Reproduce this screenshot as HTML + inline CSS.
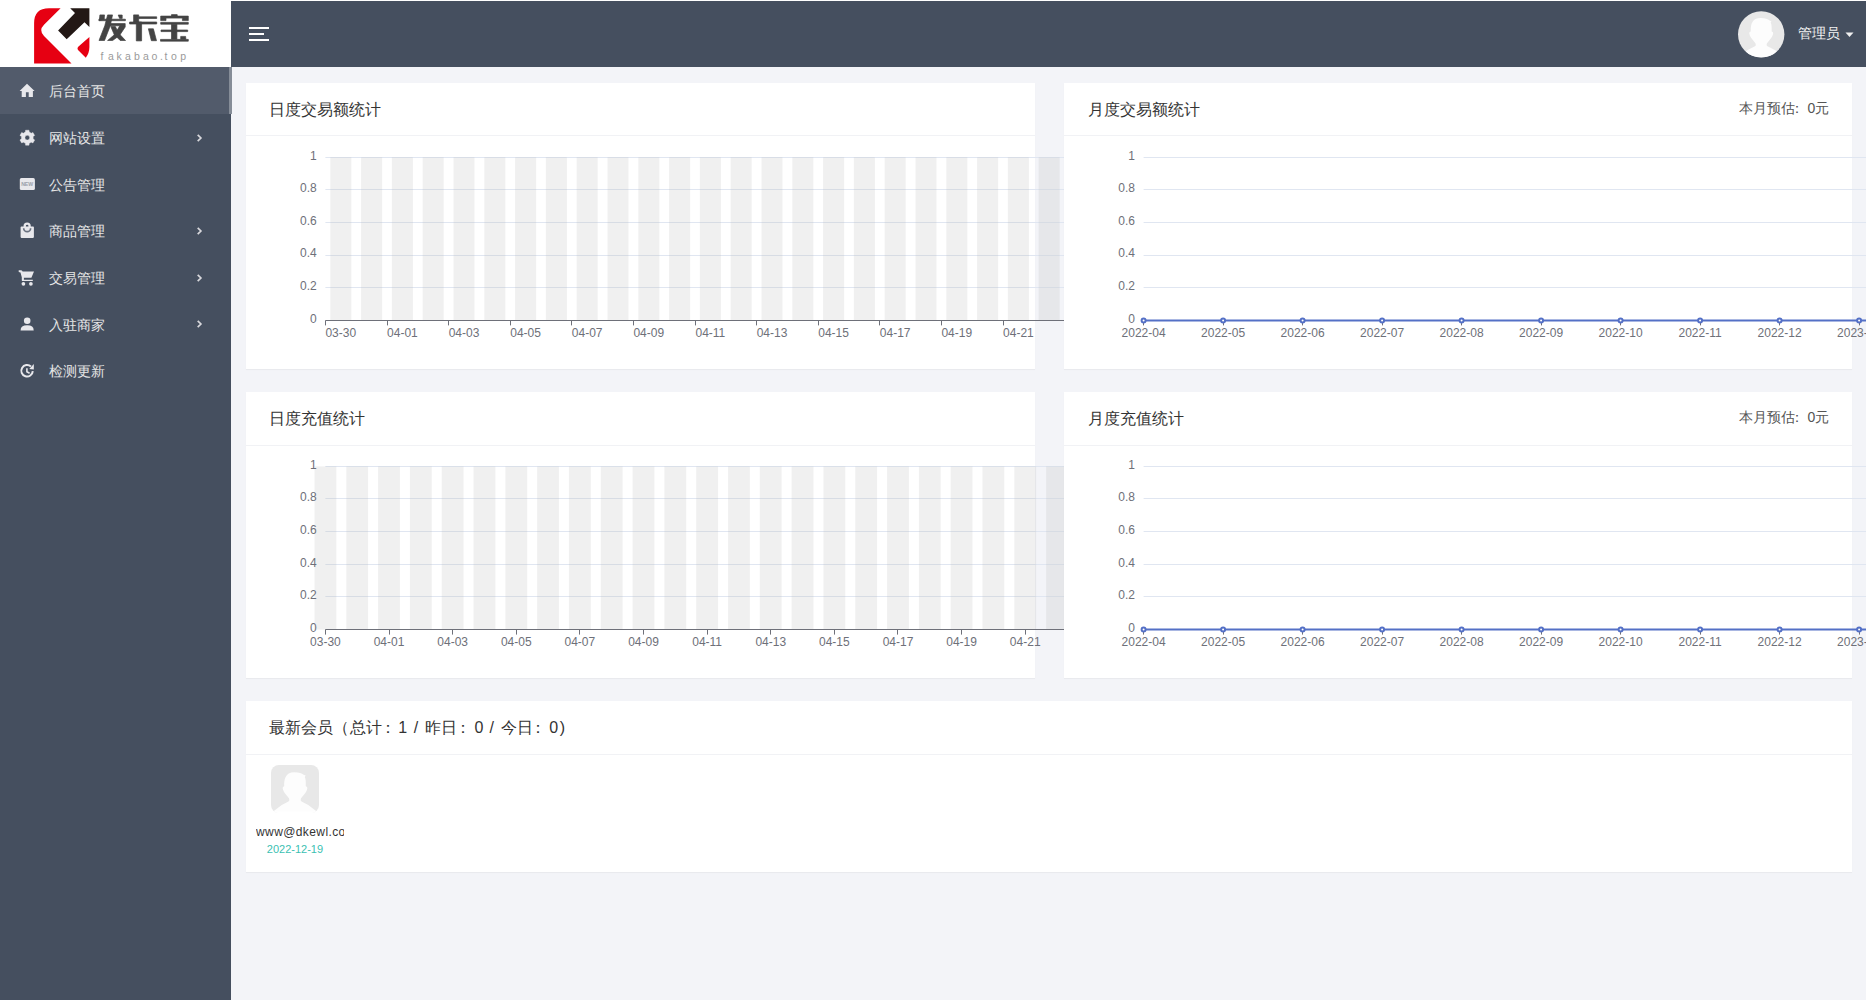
<!DOCTYPE html>
<html><head><meta charset="utf-8"><title>fakabao admin</title>
<style>
html,body{margin:0;padding:0;}
body{width:1866px;height:1000px;overflow:hidden;position:relative;background:#f3f4f8;font-family:"Liberation Sans",sans-serif;}
.abs{position:absolute;}
#logo{left:0;top:0;width:231px;height:67px;background:#fff;}
#header{left:231px;top:1px;width:1635px;height:66px;background:#454f5f;}
#topline{left:231px;top:0;width:1635px;height:1px;background:#fff;}
#sidebar{left:0;top:67px;width:231px;height:933px;background:#454f5f;}
.item{position:absolute;left:0;width:231px;height:47px;}
.item.active{background:#525b6b;}
.item .t{position:absolute;left:49px;top:1.2px;font-size:14px;line-height:47px;color:#e6e6e6;white-space:nowrap;}
.item .ic{position:absolute;left:19px;top:0;overflow:visible;}
.item .chev{position:absolute;left:196px;top:19px;}
#strip{left:228.5px;top:67px;width:3px;height:47px;background:#868d98;}
.card{position:absolute;background:#fff;box-shadow:0 1px 1px rgba(0,0,0,0.04);}
.ctitle{position:absolute;font-size:16px;line-height:20px;color:#333;white-space:nowrap;}
.chline{position:absolute;height:1px;background:#f1f2f5;}
.ch text{font-family:"Liberation Sans",sans-serif;font-size:12px;fill:#6e7079;}
.est{position:absolute;font-size:14px;line-height:18px;color:#555;white-space:nowrap;}
</style></head>
<body>
<div id="logo" class="abs">
<svg width="231" height="67" viewBox="0 0 231 67" style="position:absolute;left:0;top:0">
<path d="M60.6,8.2 L49,8.2 Q34.1,8.2 34.1,23.2 L34.1,63.5 L71.5,63.5 L44,36 Q38.4,30.4 44,24.8 Z" fill="#e60012"/>
<path d="M70.2,8.2 L89.4,8.2 L89.4,27 L84.5,22.3 L66.7,39.2 L58.1,30.6 L75,13 Z" fill="#231815"/>
<path d="M89.4,37 L89.4,47 Q89.4,53 85.8,57.8 L78.5,50.4 Q76.5,48.5 78.5,46.5 Z" fill="#e60012"/>
<g fill="#444" stroke="#444" stroke-width="0.7" stroke-linejoin="round">
<path d="M99.9,14.9 L104.5,14.9 L104.2,19.2 L99.3,20.6 Z"/>
<path d="M98.9,19.2 L125.4,19.2 L125.4,20.7 L98.9,20.7 Z"/>
<path d="M118.2,15 L122.2,15 L122.2,18.4 L119.6,18.4 Z"/>
<path d="M107.6,14.9 L112.5,14.9 L110.3,25.7 L104.5,40.5 L99,40.5 L104.8,25.7 Z"/>
<path d="M110.2,23.6 L125.2,23.6 L125.2,27 L119.5,35.5 L112.6,40.5 L107.6,40.5 L114.6,34.5 L119.8,25.8 L110.2,25.8 Z"/>
<path d="M110.8,26.6 L115.4,26.6 L118.5,33 L125.5,40.5 L120.2,40.5 L114.2,34.5 Z"/>
<path d="M133.6,14.9 L138.7,14.9 L138.7,22 L133.6,22 Z"/>
<path d="M136.3,22 L141.6,22 L141.6,40.9 L136.3,40.9 Z"/>
<path d="M138.7,16.8 L156.7,16.8 L156.7,18.5 L138.7,18.5 Z"/>
<path d="M129.6,22 L156.7,22 L156.7,24 L129.6,24 Z"/>
<path d="M148.4,28.8 L153.4,28.8 L156.5,40.7 L151.4,40.7 Z"/>
<path d="M171.5,14.6 L177.2,14.6 L177.2,16.2 L171.5,16.2 Z"/>
<path d="M160.7,16.1 L188.3,16.1 L188.3,20.6 L182.4,20.6 L182.4,18.1 L166,18.1 L166,20.6 L160.7,20.6 Z"/>
<path d="M160.7,22.4 L188.3,22.4 L188.3,24.2 L160.7,24.2 Z"/>
<path d="M171.5,24.2 L176.9,24.2 L176.9,39.2 L171.5,39.2 Z"/>
<path d="M161,30 L187.7,30 L187.7,31.6 L161,31.6 Z"/>
<path d="M180.7,36.4 L185.6,36.4 L185.9,39.3 L180.7,39.3 Z"/>
<path d="M160.5,39.4 L188.3,39.4 L188.3,41.2 L160.5,41.2 Z"/>
</g>

<text x="100.6 107.9 116.6 125.1 133.9 142.9 151.6 159.9 164.6 170.9 180.2" y="60.2" font-size="10.5" fill="#9a9a9a" style="font-family:'Liberation Sans',sans-serif">fakabao.top</text>
</svg>
</div>
<div id="topline" class="abs"></div>
<div id="header" class="abs">
<svg width="30" height="30" style="position:absolute;left:17px;top:25px" viewBox="0 0 30 30">
<rect x="1" y="1" width="20" height="2" fill="#fff"/>
<rect x="1" y="7" width="15" height="2" fill="#fff"/>
<rect x="1" y="13" width="20" height="2" fill="#fff"/>
</svg>
<svg width="48" height="48" viewBox="0 0 48 48" style="position:absolute;left:1506.7px;top:9.6px"><defs><clipPath id="cc"><circle cx="23.2" cy="23.35" r="23.2"/></clipPath></defs><circle cx="23.2" cy="23.35" r="23.2" fill="#e8e8e8"/><g clip-path="url(#cc)"><path transform="scale(0.967)" d="M23.4,7.3 C28,7.3 31,8.3 32.6,9.8 L34.6,10.5 L33.8,12 C34.8,14 34.9,17 34.8,21.2 Q36.6,21.6 36.3,23.5 Q35.8,26 34.3,28 L30,33.3 Q29,35.5 30.5,36.5 Q38,39.5 44.5,45.5 L48,48 L0,48 L3.5,45.5 Q10,39.5 17.5,36.5 Q19,35.5 18,33.3 L13.7,28 Q12.2,26 11.7,23.5 Q11.4,21.6 13.2,21.2 C13,15 14,7.3 23.4,7.3 Z" fill="#fdfdfd"/></g></svg>
<div class="abs" style="left:1566.5px;top:23.5px;font-size:14px;line-height:17px;color:#f2f2f2;white-space:nowrap">管理员</div>
<svg width="10" height="8" viewBox="0 0 10 8" style="position:absolute;left:1613.5px;top:30.5px"><path d="M0.5,0.5 L8.5,0.5 L4.5,5 Z" fill="#f0f0f0"/></svg>
</div>

<div id="sidebar" class="abs">
<div class="item active" style="top:0">
 <svg class="ic" width="16" height="47" viewBox="0 0 16 47"><path d="M8,16.8 L15.6,24 L13.9,24 L13.9,29.9 L9.7,29.9 L9.7,25.3 L6.9,25.3 L6.9,29.9 L2.7,29.9 L2.7,24 L0.6,24 Z" fill="#e8e8ec"/></svg>
 <div class="t">后台首页</div>
</div>
<div class="item" style="top:46.67px">
 <svg class="ic" width="17" height="47" viewBox="0 0 17 47"><path d="M5.35,18.59 L6.38,18.12 L6.57,16.20 L10.03,16.20 L10.22,18.12 L11.25,18.59 L12.17,19.25 L13.93,18.45 L15.66,21.45 L14.09,22.57 L14.20,23.70 L14.09,24.83 L15.66,25.95 L13.93,28.95 L12.17,28.15 L11.25,28.81 L10.22,29.28 L10.03,31.20 L6.57,31.20 L6.38,29.28 L5.35,28.81 L4.43,28.15 L2.67,28.95 L0.94,25.95 L2.51,24.83 L2.40,23.70 L2.51,22.57 L0.94,21.45 L2.67,18.45 L4.43,19.25 Z M10.70,23.70 A2.4,2.4 0 1 0 5.90,23.70 A2.4,2.4 0 1 0 10.70,23.70 Z" fill="#e8e8ec" fill-rule="evenodd" stroke="#e8e8ec" stroke-width="0.4" stroke-linejoin="round"/></svg>
 <div class="t">网站设置</div>
 <svg class="chev" width="8" height="10" viewBox="0 0 8 10"><path d="M1.7,1.9 L4.9,5 L1.7,8.1" fill="none" stroke="#d8d8dc" stroke-width="1.7"/></svg>
</div>
<div class="item" style="top:93.33px">
 <svg class="ic" width="17" height="47" viewBox="0 0 17 47"><rect x="0.8" y="18.1" width="15.1" height="11.9" rx="1.6" fill="#e8e8ec"/><text x="8.1" y="26" font-size="5.2" font-weight="bold" text-anchor="middle" fill="#9aa0a9" style="font-family:'Liberation Sans',sans-serif;letter-spacing:-0.2px">NEW</text></svg>
 <div class="t">公告管理</div>
</div>
<div class="item" style="top:140px">
 <svg class="ic" width="17" height="47" viewBox="0 0 17 47"><rect x="1.6" y="19.6" width="13.3" height="11.3" rx="0.8" fill="#e8e8ec"/><circle cx="8.15" cy="19.2" r="2.5" fill="none" stroke="#e8e8ec" stroke-width="2.3"/><path d="M4.7,21.2 A3.45,3.5 0 0 0 11.6,21.2" fill="none" stroke="#6a7280" stroke-width="1.7"/></svg>
 <div class="t">商品管理</div>
 <svg class="chev" width="8" height="10" viewBox="0 0 8 10"><path d="M1.7,1.9 L4.9,5 L1.7,8.1" fill="none" stroke="#d8d8dc" stroke-width="1.7"/></svg>
</div>
<div class="item" style="top:186.67px">
 <svg class="ic" width="17" height="47" viewBox="0 0 17 47"><path d="M-0.3,16.3 L1.9,16.3 Q3.1,16.4 3.6,17.5 L15,17.5 L12.4,23.8 L4.9,23.8 L4.9,25.7 L13.8,25.7 L13.8,27.1 L3.6,27.1 Q2.8,27.1 2.8,26.2 L2.8,23.2 L1.5,18.6 L-0.3,18 Z" fill="#e8e8ec"/><circle cx="4.4" cy="29.8" r="1.85" fill="#e8e8ec"/><circle cx="11.9" cy="29.8" r="1.85" fill="#e8e8ec"/></svg>
 <div class="t">交易管理</div>
 <svg class="chev" width="8" height="10" viewBox="0 0 8 10"><path d="M1.7,1.9 L4.9,5 L1.7,8.1" fill="none" stroke="#d8d8dc" stroke-width="1.7"/></svg>
</div>
<div class="item" style="top:233.33px">
 <svg class="ic" width="17" height="47" viewBox="0 0 17 47"><circle cx="8.2" cy="20.7" r="3.3" fill="#e8e8ec"/><path d="M1.6,30.4 Q1.6,25.3 8.2,25.3 Q14.7,25.3 14.7,30.4 Z" fill="#e8e8ec"/></svg>
 <div class="t">入驻商家</div>
 <svg class="chev" width="8" height="10" viewBox="0 0 8 10"><path d="M1.7,1.9 L4.9,5 L1.7,8.1" fill="none" stroke="#d8d8dc" stroke-width="1.7"/></svg>
</div>
<div class="item" style="top:280px">
 <svg class="ic" width="17" height="47" viewBox="0 0 17 47"><path d="M11.97,19.55 A5.75,5.75 0 1 0 13.79,24.15" fill="none" stroke="#e8e8ec" stroke-width="2"/><path d="M14.8,17 L14.8,22.4 L10.3,22 Z" fill="#e8e8ec"/><path d="M7.9,21.2 L7.9,24.8 L10.6,26.2" fill="none" stroke="#e8e8ec" stroke-width="1.6"/></svg>
 <div class="t">检测更新</div>
</div>
</div>
<div id="strip" class="abs"></div>

<!-- row 1 -->
<div class="card" style="left:246px;top:82.5px;width:789px;height:286.5px">
 <div class="ctitle" style="left:23.2px;top:17px">日度交易额统计</div>
 <div class="chline" style="left:0;top:52.5px;width:789px"></div>
</div>
<svg class="ch" width="1866" height="1000" viewBox="0 0 1866 1000" style="position:absolute;left:0;top:0;clip-path:inset(140px 802px 631px 246px)"><line x1="325.4" y1="157.5" x2="1064" y2="157.5" stroke="#e0e6f1" stroke-width="1"/><line x1="325.4" y1="189.5" x2="1064" y2="189.5" stroke="#e0e6f1" stroke-width="1"/><line x1="325.4" y1="222.5" x2="1064" y2="222.5" stroke="#e0e6f1" stroke-width="1"/><line x1="325.4" y1="255.5" x2="1064" y2="255.5" stroke="#e0e6f1" stroke-width="1"/><line x1="325.4" y1="287.5" x2="1064" y2="287.5" stroke="#e0e6f1" stroke-width="1"/><rect x="330.3" y="157.2" width="21" height="163.2" fill="rgba(180,180,180,0.2)"/><rect x="361.1" y="157.2" width="21" height="163.2" fill="rgba(180,180,180,0.2)"/><rect x="391.9" y="157.2" width="21" height="163.2" fill="rgba(180,180,180,0.2)"/><rect x="422.7" y="157.2" width="21" height="163.2" fill="rgba(180,180,180,0.2)"/><rect x="453.5" y="157.2" width="21" height="163.2" fill="rgba(180,180,180,0.2)"/><rect x="484.3" y="157.2" width="21" height="163.2" fill="rgba(180,180,180,0.2)"/><rect x="515.1" y="157.2" width="21" height="163.2" fill="rgba(180,180,180,0.2)"/><rect x="545.9" y="157.2" width="21" height="163.2" fill="rgba(180,180,180,0.2)"/><rect x="576.7" y="157.2" width="21" height="163.2" fill="rgba(180,180,180,0.2)"/><rect x="607.5" y="157.2" width="21" height="163.2" fill="rgba(180,180,180,0.2)"/><rect x="638.3" y="157.2" width="21" height="163.2" fill="rgba(180,180,180,0.2)"/><rect x="669.1" y="157.2" width="21" height="163.2" fill="rgba(180,180,180,0.2)"/><rect x="699.9" y="157.2" width="21" height="163.2" fill="rgba(180,180,180,0.2)"/><rect x="730.7" y="157.2" width="21" height="163.2" fill="rgba(180,180,180,0.2)"/><rect x="761.5" y="157.2" width="21" height="163.2" fill="rgba(180,180,180,0.2)"/><rect x="792.3" y="157.2" width="21" height="163.2" fill="rgba(180,180,180,0.2)"/><rect x="823.1" y="157.2" width="21" height="163.2" fill="rgba(180,180,180,0.2)"/><rect x="853.9" y="157.2" width="21" height="163.2" fill="rgba(180,180,180,0.2)"/><rect x="884.7" y="157.2" width="21" height="163.2" fill="rgba(180,180,180,0.2)"/><rect x="915.5" y="157.2" width="21" height="163.2" fill="rgba(180,180,180,0.2)"/><rect x="946.3" y="157.2" width="21" height="163.2" fill="rgba(180,180,180,0.2)"/><rect x="977.1" y="157.2" width="21" height="163.2" fill="rgba(180,180,180,0.2)"/><rect x="1007.9" y="157.2" width="21" height="163.2" fill="rgba(180,180,180,0.2)"/><rect x="1038.7" y="157.2" width="21" height="163.2" fill="rgba(180,180,180,0.2)"/><line x1="325.4" y1="320.5" x2="1064" y2="320.5" stroke="#6e7079" stroke-width="1"/><line x1="325.5" y1="320.5" x2="325.5" y2="325.4" stroke="#6e7079" stroke-width="1"/><text x="340.8" y="336.9" text-anchor="middle">03-30</text><line x1="387.5" y1="320.5" x2="387.5" y2="325.4" stroke="#6e7079" stroke-width="1"/><text x="402.4" y="336.9" text-anchor="middle">04-01</text><line x1="448.5" y1="320.5" x2="448.5" y2="325.4" stroke="#6e7079" stroke-width="1"/><text x="464" y="336.9" text-anchor="middle">04-03</text><line x1="510.5" y1="320.5" x2="510.5" y2="325.4" stroke="#6e7079" stroke-width="1"/><text x="525.6" y="336.9" text-anchor="middle">04-05</text><line x1="571.5" y1="320.5" x2="571.5" y2="325.4" stroke="#6e7079" stroke-width="1"/><text x="587.2" y="336.9" text-anchor="middle">04-07</text><line x1="633.5" y1="320.5" x2="633.5" y2="325.4" stroke="#6e7079" stroke-width="1"/><text x="648.8" y="336.9" text-anchor="middle">04-09</text><line x1="695.5" y1="320.5" x2="695.5" y2="325.4" stroke="#6e7079" stroke-width="1"/><text x="710.4" y="336.9" text-anchor="middle">04-11</text><line x1="756.5" y1="320.5" x2="756.5" y2="325.4" stroke="#6e7079" stroke-width="1"/><text x="772" y="336.9" text-anchor="middle">04-13</text><line x1="818.5" y1="320.5" x2="818.5" y2="325.4" stroke="#6e7079" stroke-width="1"/><text x="833.6" y="336.9" text-anchor="middle">04-15</text><line x1="879.5" y1="320.5" x2="879.5" y2="325.4" stroke="#6e7079" stroke-width="1"/><text x="895.2" y="336.9" text-anchor="middle">04-17</text><line x1="941.5" y1="320.5" x2="941.5" y2="325.4" stroke="#6e7079" stroke-width="1"/><text x="956.8" y="336.9" text-anchor="middle">04-19</text><line x1="1003.5" y1="320.5" x2="1003.5" y2="325.4" stroke="#6e7079" stroke-width="1"/><text x="1018.4" y="336.9" text-anchor="middle">04-21</text><line x1="1064.5" y1="320.5" x2="1064.5" y2="325.4" stroke="#6e7079" stroke-width="1"/><text x="1080" y="336.9" text-anchor="middle">04-23</text><text x="316.7" y="159.5" text-anchor="end">1</text><text x="316.7" y="192.14" text-anchor="end">0.8</text><text x="316.7" y="224.78" text-anchor="end">0.6</text><text x="316.7" y="257.42" text-anchor="end">0.4</text><text x="316.7" y="290.06" text-anchor="end">0.2</text><text x="316.7" y="322.7" text-anchor="end">0</text></svg>
<div class="card" style="left:1064px;top:82.5px;width:788px;height:286.5px">
 <div class="ctitle" style="left:24px;top:17px">月度交易额统计</div>
 <div class="est" style="left:675px;top:16px">本月预估</div><div class="est" style="left:726.2px;top:16px">：</div><div class="est" style="left:743.5px;top:16px">0元</div>
 <div class="chline" style="left:0;top:52.5px;width:788px"></div>
</div>
<svg class="ch" width="1866" height="1000" viewBox="0 0 1866 1000" style="position:absolute;left:0;top:0;clip-path:inset(140px 0px 631px 1064px)"><line x1="1143.6" y1="157.5" x2="1866" y2="157.5" stroke="#e0e6f1" stroke-width="1"/><line x1="1143.6" y1="189.5" x2="1866" y2="189.5" stroke="#e0e6f1" stroke-width="1"/><line x1="1143.6" y1="222.5" x2="1866" y2="222.5" stroke="#e0e6f1" stroke-width="1"/><line x1="1143.6" y1="255.5" x2="1866" y2="255.5" stroke="#e0e6f1" stroke-width="1"/><line x1="1143.6" y1="287.5" x2="1866" y2="287.5" stroke="#e0e6f1" stroke-width="1"/><line x1="1143.6" y1="320.5" x2="1866" y2="320.5" stroke="#6e7079" stroke-width="1"/><line x1="1143.5" y1="320.5" x2="1143.5" y2="325.4" stroke="#6e7079" stroke-width="1"/><text x="1143.6" y="336.9" text-anchor="middle">2022-04</text><line x1="1223.5" y1="320.5" x2="1223.5" y2="325.4" stroke="#6e7079" stroke-width="1"/><text x="1223.1" y="336.9" text-anchor="middle">2022-05</text><line x1="1302.5" y1="320.5" x2="1302.5" y2="325.4" stroke="#6e7079" stroke-width="1"/><text x="1302.6" y="336.9" text-anchor="middle">2022-06</text><line x1="1382.5" y1="320.5" x2="1382.5" y2="325.4" stroke="#6e7079" stroke-width="1"/><text x="1382.1" y="336.9" text-anchor="middle">2022-07</text><line x1="1461.5" y1="320.5" x2="1461.5" y2="325.4" stroke="#6e7079" stroke-width="1"/><text x="1461.6" y="336.9" text-anchor="middle">2022-08</text><line x1="1541.5" y1="320.5" x2="1541.5" y2="325.4" stroke="#6e7079" stroke-width="1"/><text x="1541.1" y="336.9" text-anchor="middle">2022-09</text><line x1="1620.5" y1="320.5" x2="1620.5" y2="325.4" stroke="#6e7079" stroke-width="1"/><text x="1620.6" y="336.9" text-anchor="middle">2022-10</text><line x1="1700.5" y1="320.5" x2="1700.5" y2="325.4" stroke="#6e7079" stroke-width="1"/><text x="1700.1" y="336.9" text-anchor="middle">2022-11</text><line x1="1779.5" y1="320.5" x2="1779.5" y2="325.4" stroke="#6e7079" stroke-width="1"/><text x="1779.6" y="336.9" text-anchor="middle">2022-12</text><line x1="1859.5" y1="320.5" x2="1859.5" y2="325.4" stroke="#6e7079" stroke-width="1"/><text x="1859.1" y="336.9" text-anchor="middle">2023-01</text><line x1="1143.6" y1="320.4" x2="1866" y2="320.4" stroke="#5470c6" stroke-width="2"/><circle cx="1143.6" cy="320.4" r="2" fill="#fff" stroke="#5470c6" stroke-width="2"/><circle cx="1223.1" cy="320.4" r="2" fill="#fff" stroke="#5470c6" stroke-width="2"/><circle cx="1302.6" cy="320.4" r="2" fill="#fff" stroke="#5470c6" stroke-width="2"/><circle cx="1382.1" cy="320.4" r="2" fill="#fff" stroke="#5470c6" stroke-width="2"/><circle cx="1461.6" cy="320.4" r="2" fill="#fff" stroke="#5470c6" stroke-width="2"/><circle cx="1541.1" cy="320.4" r="2" fill="#fff" stroke="#5470c6" stroke-width="2"/><circle cx="1620.6" cy="320.4" r="2" fill="#fff" stroke="#5470c6" stroke-width="2"/><circle cx="1700.1" cy="320.4" r="2" fill="#fff" stroke="#5470c6" stroke-width="2"/><circle cx="1779.6" cy="320.4" r="2" fill="#fff" stroke="#5470c6" stroke-width="2"/><circle cx="1859.1" cy="320.4" r="2" fill="#fff" stroke="#5470c6" stroke-width="2"/><text x="1134.9" y="159.5" text-anchor="end">1</text><text x="1134.9" y="192.14" text-anchor="end">0.8</text><text x="1134.9" y="224.78" text-anchor="end">0.6</text><text x="1134.9" y="257.42" text-anchor="end">0.4</text><text x="1134.9" y="290.06" text-anchor="end">0.2</text><text x="1134.9" y="322.7" text-anchor="end">0</text></svg>

<!-- row 2 -->
<div class="card" style="left:246px;top:391.8px;width:789px;height:286.5px">
 <div class="ctitle" style="left:23.2px;top:17px">日度充值统计</div>
 <div class="chline" style="left:0;top:53.2px;width:789px"></div>
</div>
<svg class="ch" width="1866" height="1000" viewBox="0 0 1866 1000" style="position:absolute;left:0;top:0;clip-path:inset(450px 802px 322px 246px)"><line x1="325.4" y1="466.5" x2="1064" y2="466.5" stroke="#e0e6f1" stroke-width="1"/><line x1="325.4" y1="498.5" x2="1064" y2="498.5" stroke="#e0e6f1" stroke-width="1"/><line x1="325.4" y1="531.5" x2="1064" y2="531.5" stroke="#e0e6f1" stroke-width="1"/><line x1="325.4" y1="564.5" x2="1064" y2="564.5" stroke="#e0e6f1" stroke-width="1"/><line x1="325.4" y1="596.5" x2="1064" y2="596.5" stroke="#e0e6f1" stroke-width="1"/><rect x="314.5" y="466.4" width="21.8" height="163.2" fill="rgba(180,180,180,0.2)"/><rect x="346.31" y="466.4" width="21.8" height="163.2" fill="rgba(180,180,180,0.2)"/><rect x="378.12" y="466.4" width="21.8" height="163.2" fill="rgba(180,180,180,0.2)"/><rect x="409.93" y="466.4" width="21.8" height="163.2" fill="rgba(180,180,180,0.2)"/><rect x="441.74" y="466.4" width="21.8" height="163.2" fill="rgba(180,180,180,0.2)"/><rect x="473.55" y="466.4" width="21.8" height="163.2" fill="rgba(180,180,180,0.2)"/><rect x="505.36" y="466.4" width="21.8" height="163.2" fill="rgba(180,180,180,0.2)"/><rect x="537.17" y="466.4" width="21.8" height="163.2" fill="rgba(180,180,180,0.2)"/><rect x="568.98" y="466.4" width="21.8" height="163.2" fill="rgba(180,180,180,0.2)"/><rect x="600.79" y="466.4" width="21.8" height="163.2" fill="rgba(180,180,180,0.2)"/><rect x="632.6" y="466.4" width="21.8" height="163.2" fill="rgba(180,180,180,0.2)"/><rect x="664.41" y="466.4" width="21.8" height="163.2" fill="rgba(180,180,180,0.2)"/><rect x="696.22" y="466.4" width="21.8" height="163.2" fill="rgba(180,180,180,0.2)"/><rect x="728.03" y="466.4" width="21.8" height="163.2" fill="rgba(180,180,180,0.2)"/><rect x="759.84" y="466.4" width="21.8" height="163.2" fill="rgba(180,180,180,0.2)"/><rect x="791.65" y="466.4" width="21.8" height="163.2" fill="rgba(180,180,180,0.2)"/><rect x="823.46" y="466.4" width="21.8" height="163.2" fill="rgba(180,180,180,0.2)"/><rect x="855.27" y="466.4" width="21.8" height="163.2" fill="rgba(180,180,180,0.2)"/><rect x="887.08" y="466.4" width="21.8" height="163.2" fill="rgba(180,180,180,0.2)"/><rect x="918.89" y="466.4" width="21.8" height="163.2" fill="rgba(180,180,180,0.2)"/><rect x="950.7" y="466.4" width="21.8" height="163.2" fill="rgba(180,180,180,0.2)"/><rect x="982.51" y="466.4" width="21.8" height="163.2" fill="rgba(180,180,180,0.2)"/><rect x="1014.32" y="466.4" width="21.8" height="163.2" fill="rgba(180,180,180,0.2)"/><rect x="1046.13" y="466.4" width="21.8" height="163.2" fill="rgba(180,180,180,0.2)"/><line x1="325.4" y1="629.5" x2="1064" y2="629.5" stroke="#6e7079" stroke-width="1"/><line x1="325.5" y1="629.5" x2="325.5" y2="634.6" stroke="#6e7079" stroke-width="1"/><text x="325.4" y="646.1" text-anchor="middle">03-30</text><line x1="389.5" y1="629.5" x2="389.5" y2="634.6" stroke="#6e7079" stroke-width="1"/><text x="389.02" y="646.1" text-anchor="middle">04-01</text><line x1="452.5" y1="629.5" x2="452.5" y2="634.6" stroke="#6e7079" stroke-width="1"/><text x="452.64" y="646.1" text-anchor="middle">04-03</text><line x1="516.5" y1="629.5" x2="516.5" y2="634.6" stroke="#6e7079" stroke-width="1"/><text x="516.26" y="646.1" text-anchor="middle">04-05</text><line x1="579.5" y1="629.5" x2="579.5" y2="634.6" stroke="#6e7079" stroke-width="1"/><text x="579.88" y="646.1" text-anchor="middle">04-07</text><line x1="643.5" y1="629.5" x2="643.5" y2="634.6" stroke="#6e7079" stroke-width="1"/><text x="643.5" y="646.1" text-anchor="middle">04-09</text><line x1="707.5" y1="629.5" x2="707.5" y2="634.6" stroke="#6e7079" stroke-width="1"/><text x="707.12" y="646.1" text-anchor="middle">04-11</text><line x1="770.5" y1="629.5" x2="770.5" y2="634.6" stroke="#6e7079" stroke-width="1"/><text x="770.74" y="646.1" text-anchor="middle">04-13</text><line x1="834.5" y1="629.5" x2="834.5" y2="634.6" stroke="#6e7079" stroke-width="1"/><text x="834.36" y="646.1" text-anchor="middle">04-15</text><line x1="897.5" y1="629.5" x2="897.5" y2="634.6" stroke="#6e7079" stroke-width="1"/><text x="897.98" y="646.1" text-anchor="middle">04-17</text><line x1="961.5" y1="629.5" x2="961.5" y2="634.6" stroke="#6e7079" stroke-width="1"/><text x="961.6" y="646.1" text-anchor="middle">04-19</text><line x1="1025.5" y1="629.5" x2="1025.5" y2="634.6" stroke="#6e7079" stroke-width="1"/><text x="1025.22" y="646.1" text-anchor="middle">04-21</text><line x1="1088.5" y1="629.5" x2="1088.5" y2="634.6" stroke="#6e7079" stroke-width="1"/><text x="1088.84" y="646.1" text-anchor="middle">04-23</text><text x="316.7" y="468.7" text-anchor="end">1</text><text x="316.7" y="501.34" text-anchor="end">0.8</text><text x="316.7" y="533.98" text-anchor="end">0.6</text><text x="316.7" y="566.62" text-anchor="end">0.4</text><text x="316.7" y="599.26" text-anchor="end">0.2</text><text x="316.7" y="631.9" text-anchor="end">0</text></svg>
<div class="card" style="left:1064px;top:391.8px;width:788px;height:286.5px">
 <div class="ctitle" style="left:24px;top:17px">月度充值统计</div>
 <div class="est" style="left:675px;top:16px">本月预估</div><div class="est" style="left:726.2px;top:16px">：</div><div class="est" style="left:743.5px;top:16px">0元</div>
 <div class="chline" style="left:0;top:53.2px;width:788px"></div>
</div>
<svg class="ch" width="1866" height="1000" viewBox="0 0 1866 1000" style="position:absolute;left:0;top:0;clip-path:inset(450px 0px 322px 1064px)"><line x1="1143.6" y1="466.5" x2="1866" y2="466.5" stroke="#e0e6f1" stroke-width="1"/><line x1="1143.6" y1="498.5" x2="1866" y2="498.5" stroke="#e0e6f1" stroke-width="1"/><line x1="1143.6" y1="531.5" x2="1866" y2="531.5" stroke="#e0e6f1" stroke-width="1"/><line x1="1143.6" y1="564.5" x2="1866" y2="564.5" stroke="#e0e6f1" stroke-width="1"/><line x1="1143.6" y1="596.5" x2="1866" y2="596.5" stroke="#e0e6f1" stroke-width="1"/><line x1="1143.6" y1="629.5" x2="1866" y2="629.5" stroke="#6e7079" stroke-width="1"/><line x1="1143.5" y1="629.5" x2="1143.5" y2="634.6" stroke="#6e7079" stroke-width="1"/><text x="1143.6" y="646.1" text-anchor="middle">2022-04</text><line x1="1223.5" y1="629.5" x2="1223.5" y2="634.6" stroke="#6e7079" stroke-width="1"/><text x="1223.1" y="646.1" text-anchor="middle">2022-05</text><line x1="1302.5" y1="629.5" x2="1302.5" y2="634.6" stroke="#6e7079" stroke-width="1"/><text x="1302.6" y="646.1" text-anchor="middle">2022-06</text><line x1="1382.5" y1="629.5" x2="1382.5" y2="634.6" stroke="#6e7079" stroke-width="1"/><text x="1382.1" y="646.1" text-anchor="middle">2022-07</text><line x1="1461.5" y1="629.5" x2="1461.5" y2="634.6" stroke="#6e7079" stroke-width="1"/><text x="1461.6" y="646.1" text-anchor="middle">2022-08</text><line x1="1541.5" y1="629.5" x2="1541.5" y2="634.6" stroke="#6e7079" stroke-width="1"/><text x="1541.1" y="646.1" text-anchor="middle">2022-09</text><line x1="1620.5" y1="629.5" x2="1620.5" y2="634.6" stroke="#6e7079" stroke-width="1"/><text x="1620.6" y="646.1" text-anchor="middle">2022-10</text><line x1="1700.5" y1="629.5" x2="1700.5" y2="634.6" stroke="#6e7079" stroke-width="1"/><text x="1700.1" y="646.1" text-anchor="middle">2022-11</text><line x1="1779.5" y1="629.5" x2="1779.5" y2="634.6" stroke="#6e7079" stroke-width="1"/><text x="1779.6" y="646.1" text-anchor="middle">2022-12</text><line x1="1859.5" y1="629.5" x2="1859.5" y2="634.6" stroke="#6e7079" stroke-width="1"/><text x="1859.1" y="646.1" text-anchor="middle">2023-01</text><line x1="1143.6" y1="629.6" x2="1866" y2="629.6" stroke="#5470c6" stroke-width="2"/><circle cx="1143.6" cy="629.6" r="2" fill="#fff" stroke="#5470c6" stroke-width="2"/><circle cx="1223.1" cy="629.6" r="2" fill="#fff" stroke="#5470c6" stroke-width="2"/><circle cx="1302.6" cy="629.6" r="2" fill="#fff" stroke="#5470c6" stroke-width="2"/><circle cx="1382.1" cy="629.6" r="2" fill="#fff" stroke="#5470c6" stroke-width="2"/><circle cx="1461.6" cy="629.6" r="2" fill="#fff" stroke="#5470c6" stroke-width="2"/><circle cx="1541.1" cy="629.6" r="2" fill="#fff" stroke="#5470c6" stroke-width="2"/><circle cx="1620.6" cy="629.6" r="2" fill="#fff" stroke="#5470c6" stroke-width="2"/><circle cx="1700.1" cy="629.6" r="2" fill="#fff" stroke="#5470c6" stroke-width="2"/><circle cx="1779.6" cy="629.6" r="2" fill="#fff" stroke="#5470c6" stroke-width="2"/><circle cx="1859.1" cy="629.6" r="2" fill="#fff" stroke="#5470c6" stroke-width="2"/><text x="1134.9" y="468.7" text-anchor="end">1</text><text x="1134.9" y="501.34" text-anchor="end">0.8</text><text x="1134.9" y="533.98" text-anchor="end">0.6</text><text x="1134.9" y="566.62" text-anchor="end">0.4</text><text x="1134.9" y="599.26" text-anchor="end">0.2</text><text x="1134.9" y="631.9" text-anchor="end">0</text></svg>

<!-- members -->
<div class="card" style="left:246px;top:701px;width:1606px;height:171px">
 <div class="ctitle" style="left:23.3px;top:17px">最新会员</div><div class="ctitle" style="left:87.3px;top:17px">（</div><div class="ctitle" style="left:103.5px;top:17px">总计</div><div class="ctitle" style="left:134.1px;top:17px">：</div><div class="ctitle" style="left:152.2px;top:17px">1</div><div class="ctitle" style="left:167.7px;top:17px">/</div><div class="ctitle" style="left:178.6px;top:17px">昨日</div><div class="ctitle" style="left:209.3px;top:17px">：</div><div class="ctitle" style="left:228.6px;top:17px">0</div><div class="ctitle" style="left:243.5px;top:17px">/</div><div class="ctitle" style="left:255.0px;top:17px">今日</div><div class="ctitle" style="left:283.8px;top:17px">：</div><div class="ctitle" style="left:303.2px;top:17px">0</div><div class="ctitle" style="left:313.8px;top:17px">)</div>
 <div class="chline" style="left:0;top:53px;width:1606px"></div>
 <svg width="48" height="48" viewBox="0 0 48 48" style="position:absolute;left:24.6px;top:63.6px"><defs><clipPath id="rc"><rect x="0" y="0" width="48" height="48" rx="8"/></clipPath></defs><rect x="0" y="0" width="48" height="48" rx="8" fill="#e8e8e8"/><g clip-path="url(#rc)"><path d="M23.4,7.3 C28,7.3 31,8.3 32.6,9.8 L34.6,10.5 L33.8,12 C34.8,14 34.9,17 34.8,21.2 Q36.6,21.6 36.3,23.5 Q35.8,26 34.3,28 L30,33.3 Q29,35.5 30.5,36.5 Q38,39.5 44.5,45.5 L48,48 L0,48 L3.5,45.5 Q10,39.5 17.5,36.5 Q19,35.5 18,33.3 L13.7,28 Q12.2,26 11.7,23.5 Q11.4,21.6 13.2,21.2 C13,15 14,7.3 23.4,7.3 Z" fill="#fdfdfd"/><rect x="0" y="46.5" width="48" height="2" fill="#fff"/></g></svg>
 <div class="abs" style="left:10px;top:123px;width:88px;overflow:hidden;font-size:12px;line-height:16px;color:#333;white-space:nowrap;letter-spacing:0.4px">www@dkewl.com</div>
 <div class="abs" style="left:20.8px;top:140px;font-size:11px;line-height:16px;color:#3bbfb2;white-space:nowrap">2022-12-19</div>
</div>
</body></html>
